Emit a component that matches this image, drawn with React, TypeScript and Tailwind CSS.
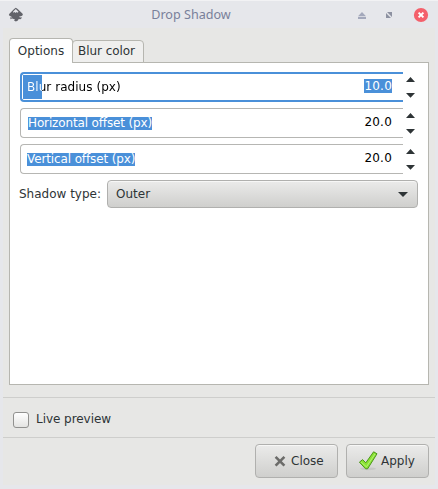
import React from "react";

function InkscapeIcon() {
  return (
    <svg width="16" height="16" viewBox="0 0 16 16" className="block">
      <path d="M7.8 .8 L9.7 2 L14.6 6.7 Q15.6 8.2 13.6 9 L10.8 9.8 L13.8 11 L12.4 12.2 L10.7 12 L9.9 13.4 L7.9 14.6 L6 13.4 L7 12.4 L4.2 11.6 L2.6 12.2 L2.2 10.6 L4.4 10.2 L1.6 8.8 Q.2 8 1.4 6.7 L6.1 1.9Z" fill="#62636a" />
      <path d="M7.8 2 L10.5 4.7 L9.7 5.8 L8.6 5 L7.8 6.1 L6.6 5 L5.4 5.8 L5 4.8Z" fill="#e4e5ea" />
      <path d="M2 10.4h2v1H2zM11.8 10h2v1h-2z" fill="#9b9ca1" />
    </svg>
  );
}

function TitleBar() {
  return (
    <header className="flex h-7 items-center border-t border-[#f2f2f4] bg-[#e6e7eb]">
      <div className="ml-2 w-[54px]"><InkscapeIcon /></div>
      <h1 className="grow pr-[36px] text-center font-['Noto_Sans',sans-serif] text-[12.6px] leading-[26px] text-[#79809a]">Drop Shadow</h1>
      <svg width="82" height="26" viewBox="356 1 82 26" className="block shrink-0">
        <path d="M358 15.2 L362 11 L366 15.2ZM358 16h8v2h-8z" fill="#a3a8bb" />
        <path d="M387 11h5v5ZM386 12v5h5Z" fill="#8d91a1" />
        <circle cx="421" cy="14" r="7.1" fill="#f4606b" />
        <path d="M418.6 11.6l4.8 4.8M423.4 11.6l-4.8 4.8" stroke="#fff" strokeWidth="2" />
      </svg>
    </header>
  );
}

function Steppers() {
  return (
    <svg width="15" height="30" viewBox="0 0 15 30" className="block shrink-0">
      <path d="M3 10 L7.5 5 L12 10ZM3 21 L7.5 25.7 L12 21Z" fill="#2e3436" />
    </svg>
  );
}

type FieldProps = { label: string; value: string; active?: boolean };

function NumberField({ label, value, active }: FieldProps) {
  return (
    <div className="flex h-[30px]">
      <div className={active
        ? "flex grow justify-between rounded-l-[4px] border-2 border-r-0 border-[#4a90d9] bg-white p-px pr-[11px] leading-6"
        : "flex grow justify-between rounded-l-[4px] border border-r-0 border-[#b6b6b3] bg-white pr-[11px] pl-[6px] leading-[27px]"}>
        {active ? (
          <>
            <span className="bg-[linear-gradient(to_right,#4a90d9_19px,transparent_19px)]">
              <span className="ml-1 inline-block bg-[linear-gradient(to_right,white_15px,black_15px)] bg-clip-text tracking-[0.05px] text-transparent">{label}</span>
            </span>
            <span className="mt-1 h-[14px] bg-[#4a90d9] leading-[14px] tracking-[0.22px] text-white">{value}</span>
          </>
        ) : (
          <>
            <span className={label.startsWith("H")
              ? "mt-2 ml-px h-[13px] bg-[#4a90d9] leading-[13px] tracking-[-0.14px] text-white [font-variant-ligatures:normal]"
              : "mt-2 h-[13px] bg-[#4a90d9] leading-[13px] tracking-[-0.12px] text-white"}>{label}</span>
            <span className="tracking-[0.22px]">{value}</span>
          </>
        )}
      </div>
      <Steppers />
    </div>
  );
}

const buttonStyle = "flex h-[34px] w-[83px] items-center rounded-[4px] border border-[#b0b0ae] bg-linear-to-b from-[#ebebea] to-[#cfcfcd] text-[#2e3436] shadow-[inset_0_1px_#f7f7f6]";

export default function App() {
  return (
    <div className="flex h-[489px] w-[438px] flex-col overflow-hidden bg-[#e6e7eb] font-['DejaVu_Sans',sans-serif] text-[12px] text-[#2e3436]">
      <TitleBar />
      <main className="mx-[3px] flex h-[457px] flex-col bg-[#e7e7e5]">
        <div className="z-10 ml-[6px] flex h-[35px] items-end pt-[10px]">
          <button className="h-[25px] w-16 rounded-t-[4px] border border-b-0 border-[#b6b6b0] bg-white text-center leading-6">Options</button>
          <button className="-ml-px h-[23px] w-[72px] rounded-t-[4px] border border-[#b6b6b0] bg-[#efefee] pl-[5px] text-left leading-[21px] tracking-[-0.05px] whitespace-nowrap">Blur color</button>
        </div>
        <section className="-mt-px mr-[6px] ml-[6px] h-[323px] border border-[#b6b6b0] bg-white pt-[9px] pr-[10px] pl-[10px]">
          <div className="flex flex-col gap-[6px] text-black">
            <NumberField label="Blur radius (px)" value="10.0" active />
            <NumberField label="Horizontal offset (px)" value="20.0" />
            <NumberField label="Vertical offset (px)" value="20.0" />
          </div>
          <div className="mt-[6px] flex h-7 items-center">
            <span className="-ml-px w-[88px] shrink-0">Shadow type:</span>
            <button className="flex h-7 grow items-center justify-between rounded-[4px] border border-[#b0b0ae] bg-linear-to-b from-[#ebebea] to-[#cfcfcd] pr-[9px] pl-2 shadow-[inset_0_1px_#f7f7f6]">
              <span>Outer</span>
              <svg width="10" height="5" viewBox="0 0 10 5"><path d="M0 0h10L5 5Z" fill="#2e3436" /></svg>
            </button>
          </div>
        </section>
        <div className="mt-3 h-px bg-[#cececc]" />
        <label className="flex h-[39px] items-center pb-[1px] pl-[10px]">
          <span className="mt-[5px] h-4 w-4 rounded-[3px] border border-[#91918f] bg-linear-to-b from-white to-[#e4e4e2]" />
          <span className="mt-[3px] ml-[7px] tracking-[-0.05px]">Live preview</span>
        </label>
        <div className="h-px shrink-0 bg-[#cececc]" />
        <div className="mt-[6px] mr-[6px] flex justify-end gap-2">
          <button className={buttonStyle}>
            <svg width="12" height="12" viewBox="0 0 12 12" className="mr-[6px] ml-[18px]"><path d="M1.6 1.8l8.8 8.8M10.4 1.8l-8.8 8.8" stroke="#6c6c6a" strokeWidth="2.6" /></svg>
            <span className="-ml-px">Close</span>
          </button>
          <button className={buttonStyle}>
            <svg width="20" height="20" viewBox="0 0 20 20" className="mr-[2px] ml-[12px] shrink-0">
              <ellipse cx="9" cy="17.8" rx="8" ry="1.4" fill="#c6c7c5" />
              <path d="M.4 11.2 L3.6 8.6 L6.8 11.8 L14.6 .8 L18 2.8 L8.6 17.8 L6.6 17.8Z" fill="#8ae234" stroke="#4c961c" strokeLinejoin="round" />
              <path d="M2.2 11.2L7.4 15.8L16 3" fill="none" stroke="#b4f277" strokeWidth="1" />
            </svg>
            Apply
          </button>
        </div>
      </main>
    </div>
  );
}
